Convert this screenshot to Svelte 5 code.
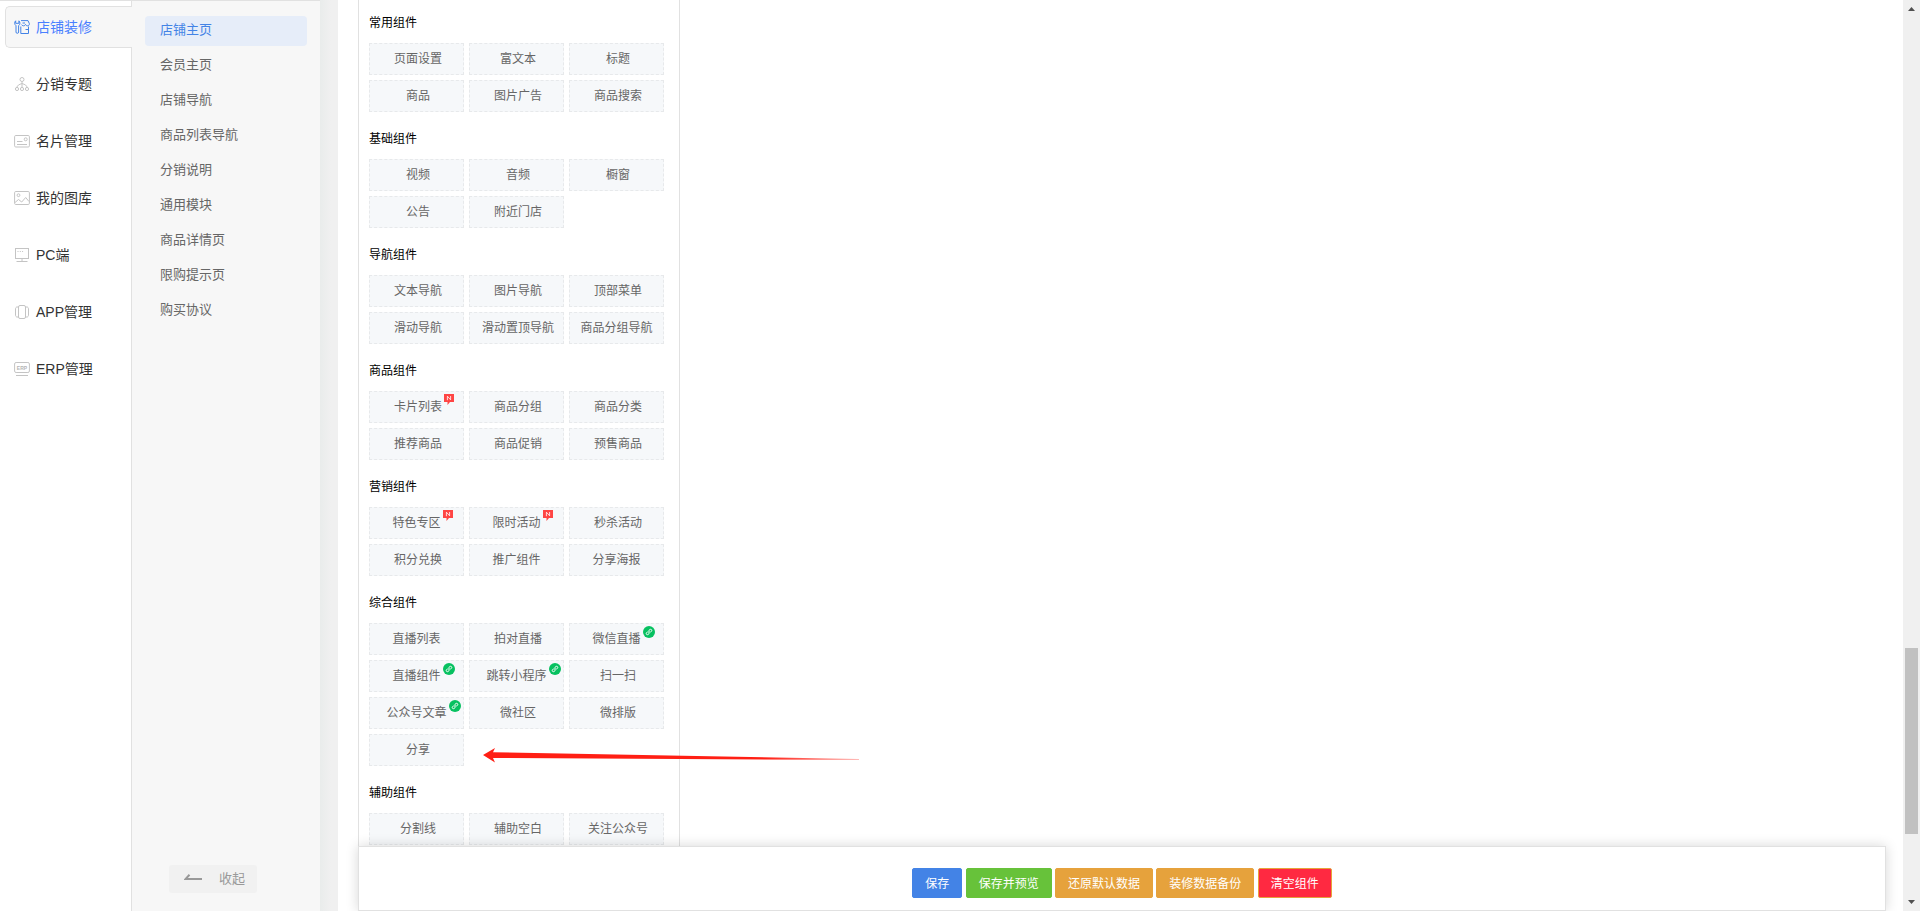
<script>
  const menu = [
    { icon: 'shop', label: '店铺装修', active: true },
    { icon: 'tree', label: '分销专题' },
    { icon: 'card', label: '名片管理' },
    { icon: 'image', label: '我的图库' },
    { icon: 'pc', label: 'PC端' },
    { icon: 'app', label: 'APP管理' },
    { icon: 'erp', label: 'ERP管理' },
  ];

  const pages = [
    '店铺主页', '会员主页', '店铺导航', '商品列表导航', '分销说明',
    '通用模块', '商品详情页', '限购提示页', '购买协议',
  ];

  // tight: label sits at the exact centre of its tile
  const groups = [
    {
      title: '常用组件',
      items: [
        { label: '页面设置' }, { label: '富文本' }, { label: '标题' },
        { label: '商品' }, { label: '图片广告' }, { label: '商品搜索' },
      ],
    },
    {
      title: '基础组件',
      items: [
        { label: '视频' }, { label: '音频' }, { label: '橱窗' },
        { label: '公告' }, { label: '附近门店' },
      ],
    },
    {
      title: '导航组件',
      items: [
        { label: '文本导航' }, { label: '图片导航' }, { label: '顶部菜单' },
        { label: '滑动导航' }, { label: '滑动置顶导航' }, { label: '商品分组导航', tight: true },
      ],
    },
    {
      title: '商品组件',
      items: [
        { label: '卡片列表', badge: 'new' }, { label: '商品分组' }, { label: '商品分类' },
        { label: '推荐商品' }, { label: '商品促销' }, { label: '预售商品' },
      ],
    },
    {
      title: '营销组件',
      items: [
        { label: '特色专区', badge: 'new', tight: true },
        { label: '限时活动', badge: 'new', tight: true },
        { label: '秒杀活动' },
        { label: '积分兑换' },
        { label: '推广组件', tight: true },
        { label: '分享海报', tight: true },
      ],
    },
    {
      title: '综合组件',
      items: [
        { label: '直播列表', tight: true },
        { label: '拍对直播' },
        { label: '微信直播', badge: 'mini', tight: true },
        { label: '直播组件', badge: 'mini', tight: true },
        { label: '跳转小程序', badge: 'mini', tight: true },
        { label: '扫一扫' },
        { label: '公众号文章', badge: 'mini', tight: true },
        { label: '微社区' },
        { label: '微排版' },
        { label: '分享' },
      ],
    },
    {
      title: '辅助组件',
      items: [{ label: '分割线' }, { label: '辅助空白' }, { label: '关注公众号' }],
    },
  ];
</script>

<div class="page">
  <nav class="menu" aria-label="主菜单">
    {#each menu as m}
      <a href="#{m.icon}" class:active={m.active}>
        <svg class="icon" viewBox="0 0 16 16" aria-hidden="true">
          {#if m.icon === 'shop'}
            <path d="M1.700 1.800C.3 3 .3 5.500 2 6.700V13a1.300 1.300 0 0 0 2.600 0V6.700C6.300 5.500 6.300 3 4.900 1.800V4.300H1.700z" />
            <path d="M7 1.600h7l1.400 3.200c0 1.300-.8 2-1.900 2s-1.900-.7-2-1.500c-.1.8-.9 1.500-2 1.500-1 0-1.700-.5-2-1.200M14.500 7.500v7H6.800V7.500M8.500 4h2.500M11.500 10.500h3" />
          {:else if m.icon === 'tree'}
            <circle cx="8" cy="3.500" r="2" />
            <circle cx="3" cy="13" r="1.600" />
            <circle cx="8" cy="13" r="1.600" />
            <circle cx="13" cy="13" r="1.600" />
            <path d="M8 5.500v5.900M3 11.400C3 9.500 5 8.500 8 7.500c3 1 5 2 5 3.900" />
          {:else if m.icon === 'card'}
            <rect x=".6" y="2.500" width="14.800" height="11.500" rx="1.200" />
            <circle cx="11.700" cy="6.300" r="1.500" />
            <path d="M3 8.500h5.500M3 11.500h10" />
          {:else if m.icon === 'image'}
            <rect x=".6" y="1.500" width="14.800" height="13" rx="1.200" />
            <circle cx="4.500" cy="5.200" r="1.400" />
            <path d="M1 12.500l3.500-3 3.200 2.500 4-4.500 3.300 4" />
          {:else if m.icon === 'pc'}
            <rect x="1.500" y="1.500" width="13" height="10" />
            <path d="M8 11.500v2.500M2.500 14.500h11M3.500 4.500h1M5.800 4.500h1M8.100 4.500h1" />
          {:else if m.icon === 'app'}
            <rect x="4.500" y="1.500" width="7" height="13" rx="1.500" />
            <path d="M4.500 3H3C2 3 1.500 4 1.500 5v6c0 1 .5 2 1.500 2h1.500M11.500 3H13c1 0 1.500 1 1.500 2v6c0 1-.5 2-1.500 2h-1.500" />
          {:else}
            <rect x=".6" y="1.500" width="14.800" height="10" rx="1.500" />
            <path d="M2 14.500h12" />
            <text x="8" y="8.500">ERP</text>
          {/if}
        </svg>
        <span>{m.label}</span>
      </a>
    {/each}
  </nav>

  <aside class="sub">
    <nav aria-label="页面">
      {#each pages as p, i}
        <a href="#page{i}" class:current={i === 0}>{p}</a>
      {/each}
    </nav>
    <button class="collapse" type="button">
      <svg viewBox="0 0 18 8" aria-hidden="true"><path d="M18 6H1.500L5.500 1.800" /></svg>
      收起
    </button>
  </aside>
  <div class="gutter"></div>

  <main>
    <div class="canvas">
      <div class="palette">
        {#each groups as g}
          <section>
            <h2>{g.title}</h2>
            <div class="tiles">
              {#each g.items as t}
                <button type="button" class="tile" class:tight={t.tight}>
                  <span class="label">{t.label}
                    {#if t.badge === 'new'}
                      <svg class="badge new" viewBox="0 0 10 11" aria-hidden="true">
                        <path fill="#ff4544" d="M0 0h10v8H6L3.500 11V8H0z" />
                        <path fill="none" stroke="#fff" stroke-width=".8" d="M3.400 6.200V2.200L6.600 5.800V2" />
                      </svg>
                    {:else if t.badge === 'mini'}
                      <svg class="badge mini" viewBox="0 0 12 12" aria-hidden="true">
                        <circle cx="6" cy="6" r="6" fill="#07c160" />
                        <path fill="none" stroke="#fff" stroke-linecap="round" d="M4.300 6C2.800 6.400 2.700 8.700 4.400 8.700 5.400 8.700 6 8 6 7.200V4.800C6 4 6.600 3.300 7.600 3.300c1.700 0 1.600 2.300.1 2.700" />
                      </svg>
                    {/if}
                  </span>
                </button>
              {/each}
            </div>
          </section>
        {/each}
      </div>
      <svg class="pointer" viewBox="0 0 376 16" aria-hidden="true">
        <defs>
          <linearGradient id="fade">
            <stop offset=".75" stop-color="#ff1f14" />
            <stop offset="1" stop-color="#ff1f14" stop-opacity=".3" />
          </linearGradient>
        </defs>
        <path fill="url(#fade)" d="M0 8L12 1 10 5.300 376 12v1L10 11l2 4.500z" />
      </svg>
    </div>
    <footer>
      <button type="button" class="save">保存</button>
      <button type="button" class="preview">保存并预览</button>
      <button type="button" class="warn">还原默认数据</button>
      <button type="button" class="warn">装修数据备份</button>
      <button type="button" class="clear">清空组件</button>
    </footer>
  </main>

  <div class="scroll" aria-hidden="true">
    <svg viewBox="0 0 17 17"><path d="M5 11l3.500-4 3.500 4z" /></svg>
    <div class="track"><div class="thumb"></div></div>
    <svg viewBox="0 0 17 17"><path d="M5 6l3.500 4L12 6z" /></svg>
  </div>
</div>

<style>
  :global(body) {
    margin: 0;
  }
  .page {
    display: flex;
    height: 100vh;
    overflow: hidden;
    background: #fff;
    color: #333;
    font-family: 'Liberation Sans', 'Noto Sans CJK SC', sans-serif;
    font-size: 12px;
  }
  button {
    font: inherit;
    cursor: pointer;
  }
  a {
    text-decoration: none;
    color: inherit;
  }

  .menu {
    box-sizing: border-box;
    flex: 0 0 132px;
    display: flex;
    flex-direction: column;
    gap: 15px;
    padding: 5px 0 0 5px;
    border-top: 1px solid #e1e1e1;
    box-shadow: inset -1px 0 #e1e1e1;
    font-size: 14px;
  }
  .menu a {
    box-sizing: border-box;
    height: 42px;
    display: flex;
    align-items: center;
    gap: 6px;
    padding-left: 8px;
    border: 1px solid transparent;
    border-right: 0;
    border-radius: 5px 0 0 5px;
    white-space: nowrap;
  }
  .menu span {
    padding-bottom: 2px;
  }
  .menu .active {
    border-color: #e1e1e1;
    background: #f7f7f7;
    color: #4a80ff;
  }
  .icon {
    width: 16px;
    height: 16px;
    fill: none;
    stroke: #c4c4c4;
  }
  .active .icon {
    stroke: #4383e6;
  }
  .icon text {
    fill: #b5b5b5;
    stroke: none;
    font-size: 5px;
    font-weight: bold;
    text-anchor: middle;
  }

  .sub {
    box-sizing: border-box;
    flex: 0 0 188px;
    display: flex;
    flex-direction: column;
    justify-content: space-between;
    padding: 15px 13px 18px;
    border-top: 1px solid #e1e1e1;
    background: #f7f7f7;
    color: #666;
    font-size: 13px;
  }
  .sub nav {
    display: flex;
    flex-direction: column;
    gap: 5px;
  }
  .sub a {
    padding: 0 0 2px 15px;
    border-radius: 4px;
    line-height: 28px;
  }
  .sub .current {
    background: #e6edf9;
    color: #4383e6;
  }
  .collapse {
    box-sizing: border-box;
    display: flex;
    align-items: center;
    gap: 17px;
    width: 88px;
    height: 28px;
    margin-left: 24px;
    padding: 0 15px 4px;
    border: 0;
    border-radius: 3px;
    background: #f1f1f1;
    color: #999;
    white-space: nowrap;
  }
  .collapse svg {
    flex: none;
    width: 18px;
    height: 8px;
    fill: none;
    stroke: #999;
    stroke-width: 2;
  }
  .gutter {
    flex: 0 0 18px;
    background: linear-gradient(to right, #e9eceb, #f0f0f0 60%);
  }

  main {
    flex: 1;
    min-width: 0;
    display: flex;
    flex-direction: column;
    padding: 0 17px 0 20px;
  }
  .canvas {
    position: relative;
    flex: 1;
    min-height: 0;
    overflow: hidden;
  }
  .palette {
    box-sizing: border-box;
    width: 322px;
    padding: 13px 10px 20px;
    border: 1px solid #e1e1e1;
    border-width: 0 1px;
  }
  section {
    margin-bottom: 17px;
  }
  h2 {
    margin: 0 0 10px;
    color: #000;
    font-size: 12px;
    font-weight: normal;
    line-height: 20px;
  }
  .tiles {
    display: grid;
    grid-template-columns: repeat(3, 95px);
    gap: 5px;
  }
  .tile {
    box-sizing: border-box;
    height: 32px;
    padding: 0 0 0 3px;
    border: 1px dashed #e7e9eb;
    background: #f6f8fa;
    color: #666;
    line-height: 30px;
    white-space: nowrap;
  }
  .tile.tight {
    padding: 0;
  }
  .label {
    position: relative;
    display: inline-block;
  }
  .badge {
    position: absolute;
    top: 2px;
    left: 100%;
    margin-left: 2px;
  }
  .new {
    width: 10px;
    height: 11px;
  }
  .mini {
    width: 12px;
    height: 12px;
  }
  .pointer {
    position: absolute;
    top: 747px;
    left: 125px;
    width: 376px;
    height: 16px;
  }

  footer {
    position: relative;
    box-sizing: border-box;
    height: 65px;
    padding-top: 21px;
    border: 1px solid #e1e1e1;
    background: #fff;
    box-shadow: 0 0 12px rgba(0, 0, 0, 0.16);
    text-align: center;
  }
  footer button {
    box-sizing: border-box;
    height: 30px;
    padding: 0 12px 2px;
    border: 1px solid;
    border-radius: 2px;
    color: #fff;
  }
  .save {
    border-color: #4383e6;
    background: #4383e6;
  }
  .preview {
    border-color: #67c23a;
    background: #67c23a;
  }
  .warn {
    border-color: #e6a23c;
    background: #e6a23c;
  }
  .clear {
    border-color: #e6a23c;
    background: #ff2941;
  }

  .scroll {
    flex: 0 0 17px;
    display: flex;
    flex-direction: column;
    background: #f0f0f0;
  }
  .scroll svg {
    width: 17px;
    height: 17px;
    fill: #505050;
  }
  .track {
    flex: 1;
    display: flex;
    flex-direction: column;
    justify-content: flex-end;
    padding: 0 2px 60px;
  }
  .thumb {
    height: 186px;
    background: #c1c1c1;
  }
</style>
